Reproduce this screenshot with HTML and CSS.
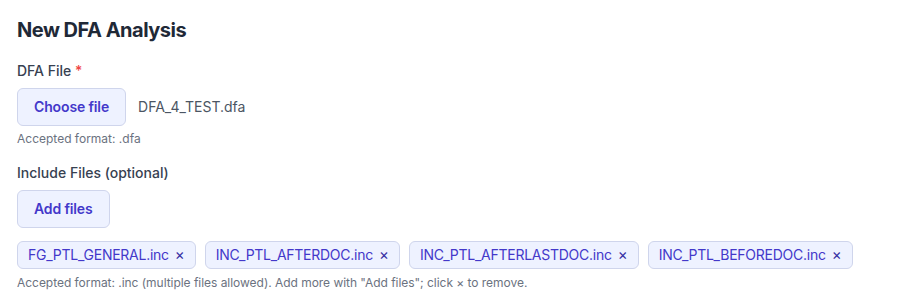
FILE: index.html
```html
<!DOCTYPE html>
<html lang="en">
<head>
<meta charset="utf-8">
<title>New DFA Analysis</title>
<link rel="stylesheet" href="styles.css">
</head>
<body>
<div class="page">
  <h1 class="title">New DFA Analysis</h1>

  <div class="field">
    <div class="label">DFA File <span class="req">*</span></div>
    <div class="file-row">
      <button class="btn" type="button">Choose file</button>
      <span class="filename">DFA_4_TEST.dfa</span>
    </div>
    <div class="help">Accepted format: .dfa</div>
  </div>

  <div class="field field-include">
    <div class="label">Include Files (optional)</div>
    <div class="file-row">
      <button class="btn" type="button">Add files</button>
    </div>
    <div class="chips">
      <span class="chip">FG_PTL_GENERAL.inc <span class="chip-x">×</span></span>
      <span class="chip">INC_PTL_AFTERDOC.inc <span class="chip-x">×</span></span>
      <span class="chip">INC_PTL_AFTERLASTDOC.inc <span class="chip-x">×</span></span>
      <span class="chip">INC_PTL_BEFOREDOC.inc <span class="chip-x">×</span></span>
    </div>
    <div class="help help-inc">Accepted format: .inc (multiple files allowed). Add more with "Add files"; click × to remove.</div>
  </div>
</div>
</body>
</html>
```

FILE: styles.css
```css
html, body {
  margin: 0;
  padding: 0;
  background: #ffffff;
}

body {
  font-family: Inter, "Noto Sans", "Liberation Sans", sans-serif;
  color: #374151;
}

.page {
  padding: 16px 17px;
}

.title {
  margin: 0 0 17px 0;
  font-size: 20px;
  line-height: 28px;
  font-weight: 700;
  letter-spacing: -0.025em;
  color: #1f2937;
}

.field-include {
  margin-top: 16px;
}

.label {
  font-size: 14px;
  line-height: 20px;
  font-weight: 500;
  color: #374151;
  margin-bottom: 7px;
}

.req {
  color: #ef4444;
}

.file-row {
  display: flex;
  align-items: center;
  gap: 12px;
}

.btn {
  font-family: inherit;
  font-size: 14px;
  line-height: 20px;
  font-weight: 600;
  letter-spacing: -0.01em;
  color: #4338ca;
  background: #eef2ff;
  border: 1px solid #cfd5ec;
  border-radius: 6px;
  padding: 8px 16px;
  margin: 0;
}

.filename {
  font-size: 14px;
  line-height: 20px;
  color: #4b5563;
}

.help {
  font-size: 12px;
  line-height: 16px;
  color: #6b7280;
  margin-top: 5px;
}

.chips {
  display: flex;
  flex-wrap: wrap;
  gap: 9px;
  margin-top: 13px;
}

.chip {
  display: inline-flex;
  align-items: center;
  gap: 6px;
  font-size: 14px;
  line-height: 20px;
  letter-spacing: -0.018em;
  color: #4338ca;
  background: #eef2ff;
  border: 1px solid #cfd5ec;
  border-radius: 6px;
  padding: 3px 10px;
}

.chip-x {
  color: #3730a3;
  font-size: 15px;
  letter-spacing: 0;
}

.help-inc {
  margin-top: 6px;
  letter-spacing: -0.003em;
}
```
